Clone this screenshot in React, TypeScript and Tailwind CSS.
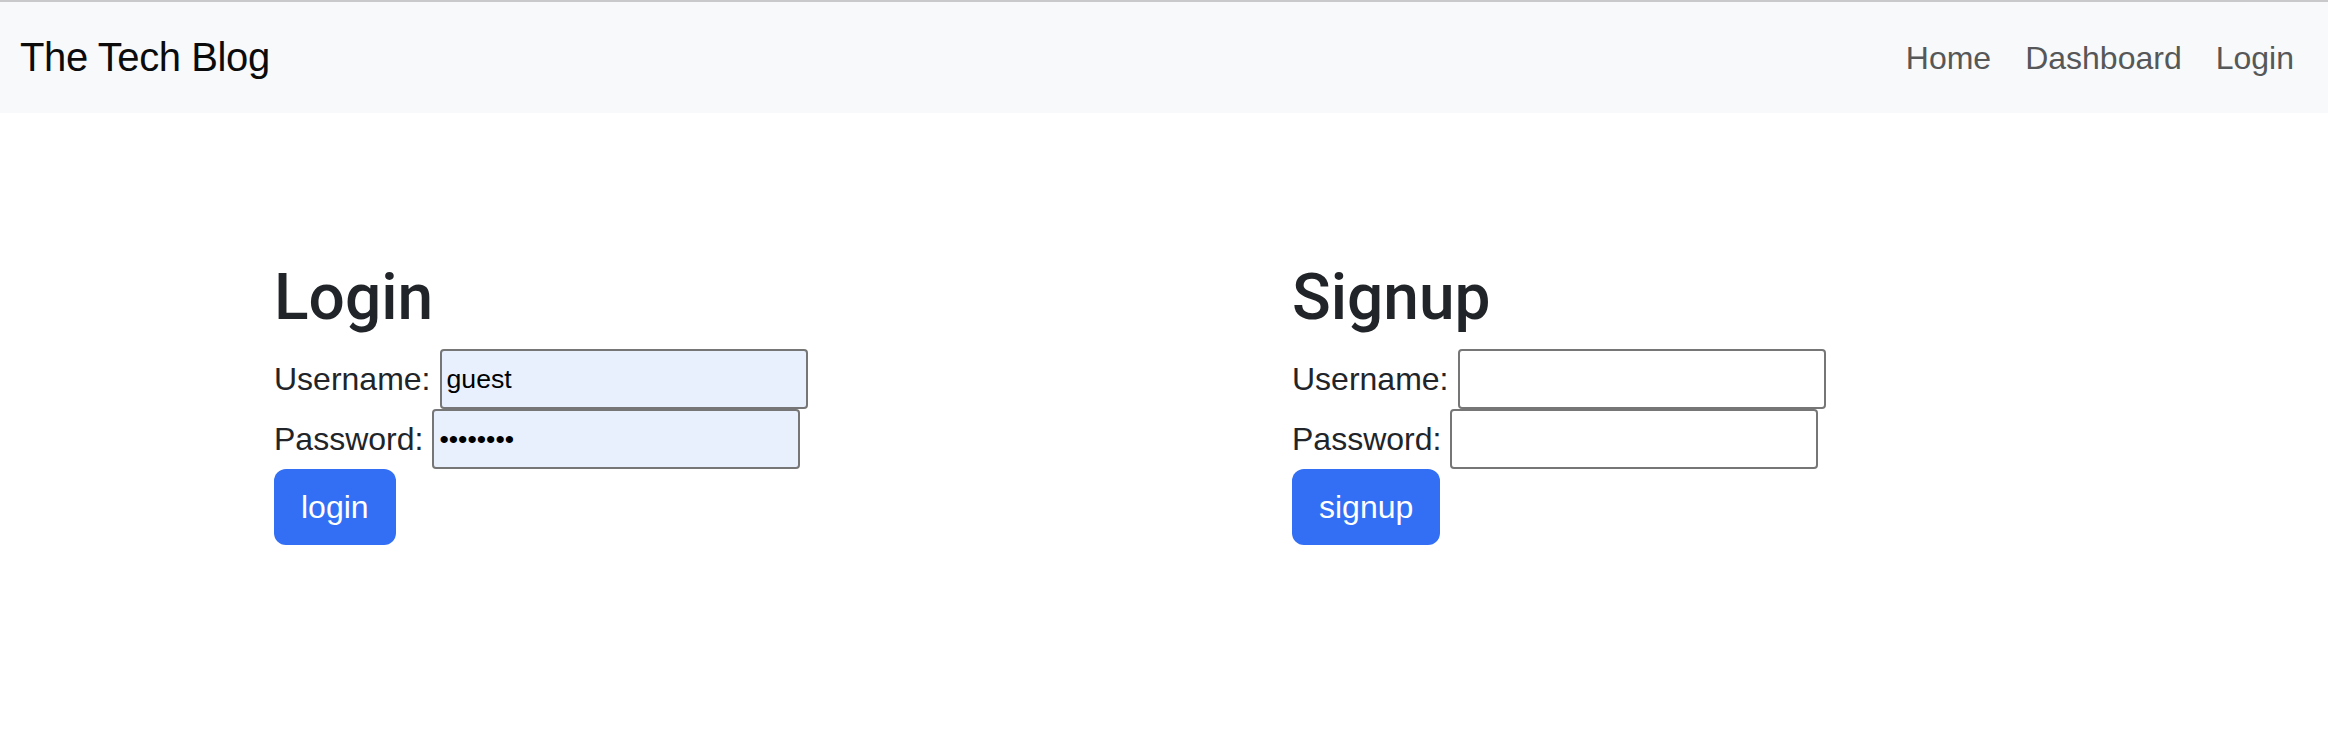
import { useState } from "react";

const font = { fontFamily: '"Liberation Sans", Arial, sans-serif' };
const headFont = { fontFamily: 'Roboto, "Liberation Sans", Arial, sans-serif' };

function Field({ label, value, type = "text", filled = false }: { label: string; value: string; type?: string; filled?: boolean }) {
  const [val, setVal] = useState(value);
  return (
    <div className="flex h-[60px] items-center">
      <label className="text-[32px] leading-[48px] text-[#212529] mr-[9px] whitespace-nowrap">{label}</label>
      <input
        type={type}
        value={val}
        onChange={(e) => setVal(e.target.value)}
        className={
          "w-[368px] h-[60px] border-2 border-[#767676] rounded-[4px] px-[5px] text-[26.67px] text-black outline-none " +
          (filled ? "bg-[#e8f0fe]" : "bg-white")
        }
        style={font}
      />
    </div>
  );
}

function FormBlock({ title, button, filled }: { title: string; button: string; filled?: boolean }) {
  return (
    <div className="w-[1018px] flex flex-col items-start">
      <h2 className="text-[64px] leading-[77px] font-medium text-[#212529] mb-[13px]" style={headFont}>
        {title}
      </h2>
      <Field label="Username:" value={filled ? "guest" : ""} filled={filled} />
      <Field label="Password:" value={filled ? "guestpwd" : ""} type="password" filled={filled} />
      <button className="h-[76px] px-[27px] rounded-[12px] bg-[#326ff5] text-white text-[32px] leading-[48px]">
        {button}
      </button>
    </div>
  );
}

export default function App() {
  return (
    <div className="min-h-screen bg-white" style={font}>
      <div className="h-[2px] bg-[#c9c9cb]" />
      <nav className="h-[111px] bg-[#f8f9fa] flex items-center justify-between pl-[20px] pr-[17px]">
        <a className="text-[40px] leading-[60px] text-[#0b0b0b] tracking-[-0.4px] pb-[2px]">The Tech Blog</a>
        <ul className="flex">
          {["Home", "Dashboard", "Login"].map((l) => (
            <li key={l}>
              <a className="block px-[17px] text-[32px] leading-[48px] text-[#565758]">{l}</a>
            </li>
          ))}
        </ul>
      </nav>
      <main className="flex pl-[274px] pt-[146px]">
        <FormBlock title="Login" button="login" filled />
        <FormBlock title="Signup" button="signup" />
      </main>
    </div>
  );
}
